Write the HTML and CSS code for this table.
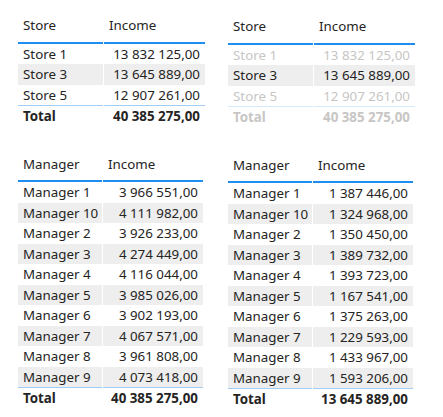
FILE: index.html
```html
<!DOCTYPE html>
<html>
<head>
<meta charset="utf-8">
<link rel="stylesheet" href="styles.css">
</head>
<body>
<div class="page">
  <div class="tbl store">
    <div class="hd">Store</div><div class="hd">Income</div>
    <div class="c">Store 1</div><div class="c n">13 832 125,00</div>
    <div class="c alt">Store 3</div><div class="c n alt">13 645 889,00</div>
    <div class="c">Store 5</div><div class="c n">12 907 261,00</div>
    <div class="t">Total</div><div class="t n">40 385 275,00</div>
  </div>
  <div class="tbl store shift">
    <div class="hd">Store</div><div class="hd">Income</div>
    <div class="c dim">Store 1</div><div class="c n dim">13 832 125,00</div>
    <div class="c alt">Store 3</div><div class="c n alt">13 645 889,00</div>
    <div class="c dim">Store 5</div><div class="c n dim">12 907 261,00</div>
    <div class="t dim tdim">Total</div><div class="t n dim tdim">40 385 275,00</div>
  </div>
  <div class="tbl mgr">
    <div class="hd">Manager</div><div class="hd">Income</div>
    <div class="c">Manager 1</div><div class="c n">3 966 551,00</div>
    <div class="c alt">Manager 10</div><div class="c n alt">4 111 982,00</div>
    <div class="c">Manager 2</div><div class="c n">3 926 233,00</div>
    <div class="c alt">Manager 3</div><div class="c n alt">4 274 449,00</div>
    <div class="c">Manager 4</div><div class="c n">4 116 044,00</div>
    <div class="c alt">Manager 5</div><div class="c n alt">3 985 026,00</div>
    <div class="c">Manager 6</div><div class="c n">3 902 193,00</div>
    <div class="c alt">Manager 7</div><div class="c n alt">4 067 571,00</div>
    <div class="c">Manager 8</div><div class="c n">3 961 808,00</div>
    <div class="c alt">Manager 9</div><div class="c n alt">4 073 418,00</div>
    <div class="t">Total</div><div class="t n">40 385 275,00</div>
  </div>
  <div class="tbl mgr shift">
    <div class="hd">Manager</div><div class="hd">Income</div>
    <div class="c">Manager 1</div><div class="c n">1 387 446,00</div>
    <div class="c alt">Manager 10</div><div class="c n alt">1 324 968,00</div>
    <div class="c">Manager 2</div><div class="c n">1 350 450,00</div>
    <div class="c alt">Manager 3</div><div class="c n alt">1 389 732,00</div>
    <div class="c">Manager 4</div><div class="c n">1 393 723,00</div>
    <div class="c alt">Manager 5</div><div class="c n alt">1 167 541,00</div>
    <div class="c">Manager 6</div><div class="c n">1 375 263,00</div>
    <div class="c alt">Manager 7</div><div class="c n alt">1 229 593,00</div>
    <div class="c">Manager 8</div><div class="c n">1 433 967,00</div>
    <div class="c alt">Manager 9</div><div class="c n alt">1 593 206,00</div>
    <div class="t">Total</div><div class="t n">13 645 889,00</div>
  </div>
</div>
</body>
</html>
```

FILE: styles.css
```css
html, body {
  margin: 0;
  padding: 0;
  background: #ffffff;
}
body {
  font-family: "Noto Sans", "Open Sans", sans-serif;
  font-size: 13.33px;
  color: #252423;
}
.page {
  display: grid;
  grid-template-columns: 187px 187px;
  column-gap: 23px;
  row-gap: 26px;
  padding: 15px 0 0 18px;
  align-items: start;
}
.tbl {
  display: grid;
  column-gap: 1px;
}
.store { grid-template-columns: 85px 101px; }
.mgr { grid-template-columns: 84px 100px; }
.shift { margin-top: 1px; }
.hd {
  line-height: 20.5px;
  padding: 0 5px 6px 5px;
  border-bottom: 2px solid #1f8ef1;
  white-space: nowrap;
}
.c, .t {
  line-height: 20.5px;
  padding: 0 5px;
  white-space: nowrap;
}
.alt { background: #eeeeee; }
.n { text-align: right; }
.t {
  font-weight: bold;
  border-top: 1px solid #9fcdf6;
}
.dim { color: #c8c6c4; }
.tdim { border-top-color: #d4e9fc; }
```
